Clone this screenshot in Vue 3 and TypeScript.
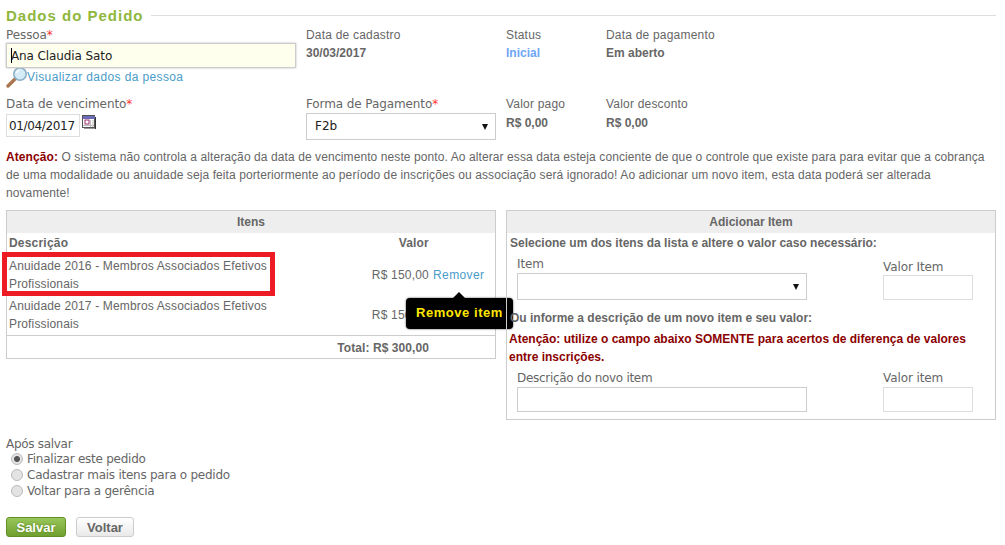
<script setup lang="ts">
interface Item { desc: string; value: string }
const items: Item[] = [
  { desc: 'Anuidade 2016 - Membros Associados Efetivos Profissionais', value: 'R$ 150,00' },
  { desc: 'Anuidade 2017 - Membros Associados Efetivos Profissionais', value: 'R$ 150,00' },
]
const afterSave = ['Finalizar este pedido', 'Cadastrar mais itens para o pedido', 'Voltar para a gerência']
</script>

<template>
  <div class="page">
    <div class="legend">
      <span class="legend-text">Dados do Pedido</span>
      <span class="legend-line"></span>
    </div>

    <div class="grid row-one">
      <div>
        <div class="label v">Pessoa<span class="req">*</span></div>
        <div class="person-wrap">
          <input class="person" value="Ana Claudia Sato" />
          <span class="caret"></span>
        </div>
        <a class="view-link">
          <svg class="lens" width="22" height="22" viewBox="0 0 22 22">
            <path d="M9 13 L2 20" stroke="#a9764f" stroke-width="3.4" stroke-linecap="round" />
            <circle cx="14" cy="8" r="6.2" fill="#d5ebf7" stroke="#8db0c6" stroke-width="1.6" />
            <path d="M10.5 7a4 4 0 0 1 3-3" stroke="#fff" stroke-width="1.4" fill="none" />
          </svg>Visualizar dados da pessoa
        </a>
      </div>
      <div class="info">
        <div class="label">Data de cadastro</div>
        <div class="val">30/03/2017</div>
      </div>
      <div class="info">
        <div class="label">Status</div>
        <div class="val blue">Inicial</div>
      </div>
      <div class="info">
        <div class="label">Data de pagamento</div>
        <div class="val">Em aberto</div>
      </div>
    </div>

    <div class="grid row-two">
      <div>
        <div class="label v">Data de vencimento<span class="req">*</span></div>
        <div class="date-row">
          <input class="date" value="01/04/2017" />
          <svg class="cal" width="14" height="14" viewBox="0 0 14 14">
            <rect x="0.5" y="0.5" width="12" height="12" fill="#fff" stroke="#555" />
            <rect x="1" y="1" width="12" height="3" fill="#6a6ab8" />
            <rect x="3" y="5" width="4" height="4" fill="#fff" stroke="#a03070" />
            <path d="M8.5 5v7M11 5v7M1 10.5h11" stroke="#bbb" />
            <path d="M13.5 2v12H2" stroke="#333" fill="none" />
          </svg>
        </div>
      </div>
      <div>
        <div class="label v">Forma de Pagamento<span class="req">*</span></div>
        <div class="select pay">F2b</div>
      </div>
      <div class="info">
        <div class="label">Valor pago</div>
        <div class="val">R$ 0,00</div>
      </div>
      <div class="info">
        <div class="label">Valor desconto</div>
        <div class="val">R$ 0,00</div>
      </div>
    </div>

    <p class="warning">
      <strong>Atenção:</strong> O sistema não controla a alteração da data de vencimento neste ponto. Ao alterar essa data esteja conciente de que o controle que existe para para evitar que a cobrança de uma modalidade ou anuidade seja feita porteriormente ao período de inscrições ou associação será ignorado! Ao adicionar um novo item, esta data poderá ser alterada novamente!
    </p>

    <div class="panels">
      <section class="panel items">
        <h3>Itens</h3>
        <table>
          <colgroup>
            <col class="c1" />
            <col class="c2" />
            <col class="c3" />
          </colgroup>
          <thead>
            <tr><th class="d">Descrição</th><th class="r">Valor</th><th></th></tr>
          </thead>
          <tbody>
            <tr v-for="it in items" :key="it.desc">
              <td class="d">{{ it.desc }}</td>
              <td class="amount">{{ it.value }}</td>
              <td class="rm"><a>Remover</a></td>
            </tr>
          </tbody>
          <tfoot>
            <tr><td colspan="2" class="total">Total: R$ 300,00</td><td></td></tr>
          </tfoot>
        </table>
        <div class="highlight"></div>
        <div class="tooltip">Remove item</div>
      </section>

      <section class="panel add">
        <h3>Adicionar Item</h3>
        <div class="hint">Selecione um dos itens da lista e altere o valor caso necessário:</div>
        <div class="add-row first">
          <div class="col-a">
            <div class="label v">Item</div>
            <div class="select item-select"></div>
          </div>
          <div class="col-b">
            <div class="label v">Valor Item</div>
            <input class="small" />
          </div>
        </div>
        <div class="hint or">Ou informe a descrição de um novo item e seu valor:</div>
        <div class="alert">Atenção: utilize o campo abaixo SOMENTE para acertos de diferença de valores entre inscrições.</div>
        <div class="add-row">
          <div class="col-a">
            <div class="label v tight">Descrição do novo item</div>
            <input class="wide" />
          </div>
          <div class="col-b">
            <div class="label v">Valor item</div>
            <input class="small" />
          </div>
        </div>
      </section>
    </div>

    <div class="after">
      <div class="label v tight">Após salvar</div>
      <label v-for="(o, i) in afterSave" :key="o" class="radio">
        <input type="radio" name="after" :checked="i === 0" />{{ o }}
      </label>
    </div>

    <div class="actions">
      <button class="btn save">Salvar</button>
      <button class="btn back">Voltar</button>
    </div>
  </div>
</template>

<style scoped>
.page {
  width: 990px;
  height: 545px;
  padding-left: 6px;
  overflow: hidden;
  font-family: "Liberation Sans", Arial, sans-serif;
  font-size: 12px;
  color: #666;
  position: relative;
}
.legend {
  display: flex;
  align-items: center;
  height: 27px;
  padding-top: 4px;
  box-sizing: border-box;
}
.legend-text {
  font-weight: bold;
  font-size: 15px;
  letter-spacing: 1px;
  color: #8fb73e;
  margin-right: 7px;
}
.legend-line {
  flex: 1;
  height: 1px;
  background: #ddd;
  margin-top: -1px;
}
.grid {
  display: grid;
  grid-template-columns: 300px 200px 100px 1fr;
}
.row-one { height: 69px; }
.row-two { height: 49px; }
.label {
  line-height: 16px;
  letter-spacing: 0.2px;
}
.label.v {
  font-family: "DejaVu Sans", Verdana, sans-serif;
  letter-spacing: -0.1px;
}
.label.v.tight { letter-spacing: -0.3px; }
.req { color: #f33; }
.val {
  font-weight: bold;
  margin-top: 2px;
  line-height: 16px;
}
.row-two .val { margin-top: 3px; }
.blue { color: #6ea6f5; }
.person-wrap { position: relative; width: 290px; }
.person {
  box-sizing: border-box;
  width: 290px;
  height: 25px;
  border: 1px solid #ccc;
  box-shadow: 0 0 2px #bbb;
  background: #ffffee;
  padding: 0 4px;
  font-family: "DejaVu Sans", Verdana, sans-serif;
  font-size: 12px;
  letter-spacing: -0.1px;
  color: #222;
  outline: none;
}
.caret {
  position: absolute;
  left: 5px;
  top: 5px;
  width: 1px;
  height: 15px;
  background: #000;
}
.view-link {
  display: flex;
  align-items: center;
  color: #4a9cc9;
  letter-spacing: 0.38px;
  height: 18px;
}
.lens { flex: none; margin-right: -1px; }
.date-row { display: flex; align-items: flex-start; margin-top: 2px; }
.date {
  box-sizing: border-box;
  width: 74px;
  height: 23px;
  border: 1px solid #ddd;
  padding: 0 1px 0 2px;
  font-family: "DejaVu Sans", Verdana, sans-serif;
  font-size: 12px;
  letter-spacing: -0.35px;
  color: #222;
  outline: none;
}
.cal { margin: 1px 0 0 2px; }
.select {
  box-sizing: border-box;
  position: relative;
  border: 1px solid #ccc;
  background: #fff;
  font-family: "DejaVu Sans", Verdana, sans-serif;
  color: #222;
}
.select::after {
  content: "";
  position: absolute;
  right: 7px;
  top: 10px;
  border-left: 3.5px solid transparent;
  border-right: 3.5px solid transparent;
  border-top: 6px solid #111;
}
.pay {
  width: 190px;
  height: 27px;
  line-height: 25px;
  padding-left: 8px;
  margin-top: 1px;
}
.warning {
  margin: 3px 0 0;
  width: 985px;
  line-height: 18px;
  height: 54px;
  letter-spacing: 0.09px;
}
.warning strong { color: #8b0000; }
.panels {
  display: flex;
  gap: 10px;
  align-items: flex-start;
  margin-top: 8px;
}
.panel {
  box-sizing: border-box;
  width: 490px;
  border: 1px solid #ccc;
  position: relative;
}
.panel h3 {
  margin: 0;
  height: 22px;
  line-height: 22px;
  background: #eee;
  text-align: center;
  font-size: 12px;
  font-weight: bold;
  color: #666;
}
.items { height: 149px; }
.items table {
  width: 488px;
  border-collapse: collapse;
  table-layout: fixed;
}
.c1 { width: 290px; }
.c2 { width: 132px; }
.c3 { width: 66px; }
th { font-weight: bold; height: 20px; padding: 0; letter-spacing: 0.2px; }
th.d { text-align: left; padding-left: 2px; }
th.r { text-align: right; }
td { padding: 0; }
td.d { padding: 2px 0 2px 2px; line-height: 18px; height: 36px; color: #666; letter-spacing: 0.15px; }
tbody tr:first-child td.d { padding-top: 4px; padding-bottom: 2px; }
tbody tr:first-child .amount, tbody tr:first-child .rm { padding-top: 2px; }
.amount { text-align: right; vertical-align: middle; letter-spacing: 0.2px; }
.rm { padding-left: 4px; }
.rm a { color: #4a9cc9; letter-spacing: 0.4px; }
tfoot td { border-top: 1px solid #ccc; height: 22px; padding-top: 1px; }
.total { text-align: right; font-weight: bold; letter-spacing: 0.08px; }
.highlight {
  position: absolute;
  left: -5px;
  top: 41px;
  width: 263px;
  height: 34px;
  border: 5px solid #ed1c24;
}
.tooltip {
  position: absolute;
  left: 399px;
  top: 87px;
  width: 107px;
  height: 31px;
  line-height: 29px;
  text-align: center;
  box-sizing: border-box;
  background: #000;
  color: #ffe800;
  font-weight: bold;
  font-size: 13px;
  border-radius: 4px;
  box-shadow: 0 0 2px #333;
  letter-spacing: 0.55px;
}
.tooltip::before {
  content: "";
  position: absolute;
  left: 47px;
  top: -6px;
  border-left: 6px solid transparent;
  border-right: 6px solid transparent;
  border-bottom: 6px solid #000;
}
.add { height: 210px; }
.hint {
  font-weight: bold;
  line-height: 18px;
  padding-left: 3px;
  margin-top: 1px;
}
.add-row {
  display: flex;
  padding-left: 10px;
}
.col-a { width: 366px; }
.col-b { width: 90px; }
.first .col-a .label { margin-top: 4px; }
.first .col-b .label { margin-top: 7px; }
.item-select { width: 290px; height: 27px; margin-top: 1px; }
.small, .wide {
  box-sizing: border-box;
  height: 25px;
  border: 1px solid #ddd;
  display: block;
  margin-top: 1px;
  outline: none;
}
.first .small { margin-top: 0; }
.small { width: 90px; }
.wide { width: 290px; border-color: #ccc; }
.or { margin-top: 9px; }
.alert {
  color: #8b0000;
  font-weight: bold;
  line-height: 18px;
  padding-left: 2px;
  margin-top: 3px;
  margin-bottom: 4px;
}
.after { position: absolute; top: 436px; left: 6px; }
.radio {
  display: flex;
  align-items: center;
  line-height: 16px;
  height: 16px;
  padding-left: 5px;
  font-family: "DejaVu Sans", Verdana, sans-serif;
  letter-spacing: -0.25px;
  position: relative;
  top: -1px;
}
.radio input {
  appearance: none;
  width: 10px;
  height: 10px;
  margin: 0 4px 0 0;
  border-radius: 50%;
  border: 1px solid #bbb;
  background: #e3e3e3;
  box-sizing: content-box;
}
.radio input:checked {
  background: radial-gradient(circle, #555 0 2.5px, #e3e3e3 3.5px);
}
.actions {
  position: absolute;
  top: 517px;
  left: 6px;
  display: flex;
  gap: 10px;
}
.btn {
  height: 20px;
  border-radius: 3px;
  font-family: "Liberation Sans", Arial, sans-serif;
  font-size: 13px;
  font-weight: bold;
  padding: 0;
}
.save {
  width: 60px;
  background: linear-gradient(#9ac65a, #6f9f2e);
  border: 1px solid #5f8f26;
  color: #fff;
  text-shadow: 0 0 2px #4d7a1a;
}
.back {
  width: 58px;
  background: linear-gradient(#fff, #e9e9e9);
  border: 1px solid #ccc;
  color: #666;
}
</style>
